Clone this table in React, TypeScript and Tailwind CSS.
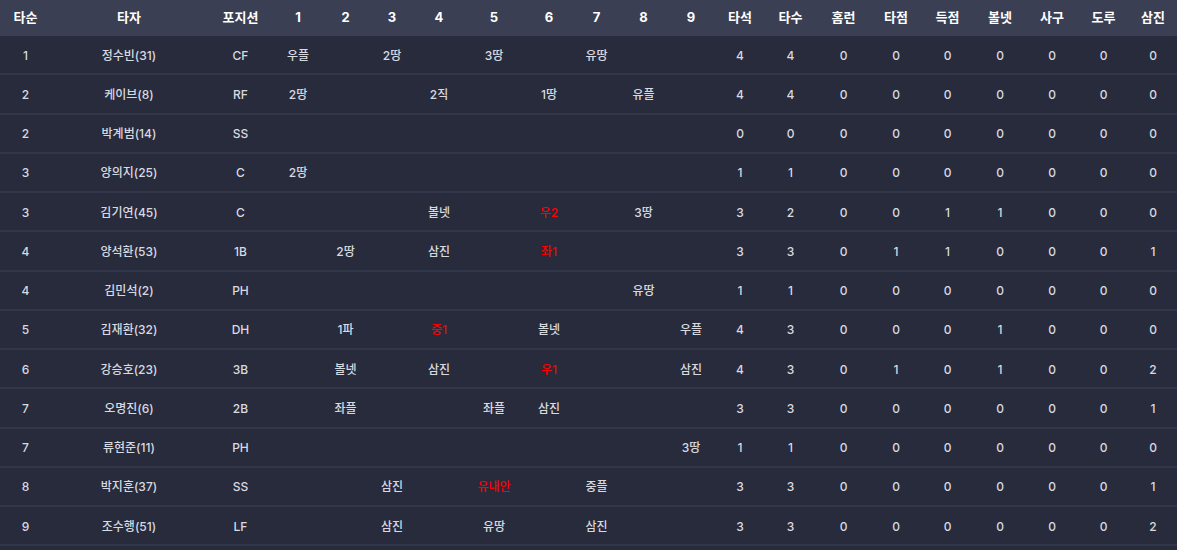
import React from 'react';

// 타자 기록표 — 이닝별 결과 + 누적 기록
type Row = {
  order: number;
  name: string;
  pos: string;
  innings: Record<number, string>;
  hits?: number[]; // 안타 이닝 (빨간 글씨)
  stats: number[];
};

const rows: Row[] = [
  { order: 1, name: '정수빈(31)', pos: 'CF', innings: { 1: '우플', 3: '2땅', 5: '3땅', 7: '유땅' }, stats: [4, 4, 0, 0, 0, 0, 0, 0, 0] },
  { order: 2, name: '케이브(8)', pos: 'RF', innings: { 1: '2땅', 4: '2직', 6: '1땅', 8: '유플' }, stats: [4, 4, 0, 0, 0, 0, 0, 0, 0] },
  { order: 2, name: '박계범(14)', pos: 'SS', innings: {}, stats: [0, 0, 0, 0, 0, 0, 0, 0, 0] },
  { order: 3, name: '양의지(25)', pos: 'C', innings: { 1: '2땅' }, stats: [1, 1, 0, 0, 0, 0, 0, 0, 0] },
  { order: 3, name: '김기연(45)', pos: 'C', innings: { 4: '볼넷', 6: '우2', 8: '3땅' }, hits: [6], stats: [3, 2, 0, 0, 1, 1, 0, 0, 0] },
  { order: 4, name: '양석환(53)', pos: '1B', innings: { 2: '2땅', 4: '삼진', 6: '좌1' }, hits: [6], stats: [3, 3, 0, 1, 1, 0, 0, 0, 1] },
  { order: 4, name: '김민석(2)', pos: 'PH', innings: { 8: '유땅' }, stats: [1, 1, 0, 0, 0, 0, 0, 0, 0] },
  { order: 5, name: '김재환(32)', pos: 'DH', innings: { 2: '1파', 4: '중1', 6: '볼넷', 9: '우플' }, hits: [4], stats: [4, 3, 0, 0, 0, 1, 0, 0, 0] },
  { order: 6, name: '강승호(23)', pos: '3B', innings: { 2: '볼넷', 4: '삼진', 6: '우1', 9: '삼진' }, hits: [6], stats: [4, 3, 0, 1, 0, 1, 0, 0, 2] },
  { order: 7, name: '오명진(6)', pos: '2B', innings: { 2: '좌플', 5: '좌플', 6: '삼진' }, stats: [3, 3, 0, 0, 0, 0, 0, 0, 1] },
  { order: 7, name: '류현준(11)', pos: 'PH', innings: { 9: '3땅' }, stats: [1, 1, 0, 0, 0, 0, 0, 0, 0] },
  { order: 8, name: '박지훈(37)', pos: 'SS', innings: { 3: '삼진', 5: '유내안', 7: '중플' }, hits: [5], stats: [3, 3, 0, 0, 0, 0, 0, 0, 1] },
  { order: 9, name: '조수행(51)', pos: 'LF', innings: { 3: '삼진', 5: '유땅', 7: '삼진' }, stats: [3, 3, 0, 0, 0, 0, 0, 0, 2] },
];

const headers = ['타순', '타자', '포지션', '1', '2', '3', '4', '5', '6', '7', '8', '9', '타석', '타수', '홈런', '타점', '득점', '볼넷', '사구', '도루', '삼진'];

const grid =
  'grid grid-cols-[51px_156px_67px_48px_47px_46px_48px_62px_48px_47px_47px_48px_50px_51px_55px_50px_53px_52px_52px_51px_48px]';

export default function App() {
  return (
    <div
      className="w-[1177px] h-[550px] overflow-hidden bg-[#282b3b]"
      style={{ fontFamily: 'Inter, "Noto Sans CJK KR", sans-serif' }}
    >
      {/* Header */}
      <div className={clsx(grid, 'h-[36px] items-center bg-[#3a3f54] text-white text-[13px] font-bold')}>
        {headers.map((h) => (
          <div key={h} className="text-center">
            {h}
          </div>
        ))}
      </div>

      {/* Body */}
      {rows.map((r, i) => (
        <div
          key={i}
          className={clsx(grid, 'h-[39.25px] pt-[2px] items-center border-b-2 border-[#32364a] text-[12px] font-medium text-[#d8dae0]')}
        >
          <div className="text-center">{r.order}</div>
          <div className="text-center">{r.name}</div>
          <div className="text-center">{r.pos}</div>
          {[1, 2, 3, 4, 5, 6, 7, 8, 9].map((n) => (
            <div
              key={n}
              className={clsx('text-center', r.hits?.includes(n) && 'text-[#ff0000]')}
            >
              {r.innings[n] ?? ''}
            </div>
          ))}
          {r.stats.map((s, j) => (
            <div key={j} className="text-center">
              {s}
            </div>
          ))}
        </div>
      ))}
    </div>
  );
}

function clsx(...args: (string | false | undefined)[]) {
  return args.filter(Boolean).join(' ');
}
